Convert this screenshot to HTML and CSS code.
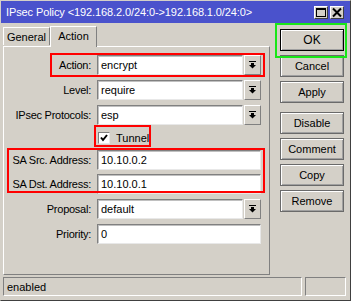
FILE: index.html
```html
<!DOCTYPE html>
<html lang="en">
<head>
    <meta charset="utf-8">
    <title>IPsec Policy</title>
    <link rel="stylesheet" href="styles.css">
</head>
<body>
    <div class="window">
        <div class="titlebar">
            <span class="title">IPsec Policy &lt;192.168.2.0/24:0-&gt;192.168.1.0/24:0&gt;</span>
            <span class="tbtn">
                <svg width="12" height="11" viewBox="0 0 12 11"><rect x="1.5" y="1.5" width="9" height="8" fill="none" stroke="#000"/><rect x="1" y="1" width="10" height="2" fill="#000"/></svg>
            </span>
            <span class="tbtn">
                <svg width="12" height="11" viewBox="0 0 12 11"><path d="M2 1.5 L10 9.5 M10 1.5 L2 9.5" stroke="#000" stroke-width="2"/></svg>
            </span>
        </div>
        <div class="main">
            <div class="left">
                <div class="tabs">
                    <div class="tab">General</div>
                    <div class="tab active">Action</div>
                </div>
                <div class="panel">
                    <div class="row">
                        <label>Action:</label>
                        <div class="combo"><div class="field">encrypt</div><div class="drop"><svg width="7" height="8" viewBox="0 0 7 8"><rect x="0" y="0" width="7" height="1"/><rect x="2" y="2" width="3" height="2"/><path d="M0 4 H7 L3.5 7.5 Z"/></svg></div></div>
                    </div>
                    <div class="row">
                        <label>Level:</label>
                        <div class="combo"><div class="field">require</div><div class="drop"><svg width="7" height="8" viewBox="0 0 7 8"><rect x="0" y="0" width="7" height="1"/><rect x="2" y="2" width="3" height="2"/><path d="M0 4 H7 L3.5 7.5 Z"/></svg></div></div>
                    </div>
                    <div class="row">
                        <label>IPsec Protocols:</label>
                        <div class="combo"><div class="field">esp</div><div class="drop"><svg width="7" height="8" viewBox="0 0 7 8"><rect x="0" y="0" width="7" height="1"/><rect x="2" y="2" width="3" height="2"/><path d="M0 4 H7 L3.5 7.5 Z"/></svg></div></div>
                    </div>
                    <div class="row short">
                        <span></span>
                        <div class="check"><span class="box"><svg width="10" height="10" viewBox="0 0 10 10"><path d="M2 4.5 L4 7 L8 2" fill="none" stroke="#000" stroke-width="2"/></svg></span>Tunnel</div>
                    </div>
                    <div class="row">
                        <label>SA Src. Address:</label>
                        <div class="field">10.10.0.2</div>
                    </div>
                    <div class="row tight">
                        <label>SA Dst. Address:</label>
                        <div class="field">10.10.0.1</div>
                    </div>
                    <div class="row">
                        <label>Proposal:</label>
                        <div class="combo"><div class="field">default</div><div class="drop"><svg width="7" height="8" viewBox="0 0 7 8"><rect x="0" y="0" width="7" height="1"/><rect x="2" y="2" width="3" height="2"/><path d="M0 4 H7 L3.5 7.5 Z"/></svg></div></div>
                    </div>
                    <div class="row">
                        <label>Priority:</label>
                        <div class="field">0</div>
                    </div>
                </div>
            </div>
            <div class="buttons">
                <button class="default">OK</button>
                <button>Cancel</button>
                <button>Apply</button>
                <button class="sep">Disable</button>
                <button>Comment</button>
                <button>Copy</button>
                <button>Remove</button>
            </div>
        </div>
        <div class="status">
            <div class="cell wide">enabled</div>
            <div class="cell"></div>
        </div>
        <div class="mark red mark-action"></div>
        <div class="mark red mark-tunnel"></div>
        <div class="mark red mark-sa"></div>
        <div class="mark green mark-ok"></div>
    </div>
</body>
</html>
```

FILE: styles.css
```css
body {
    margin: 0;
    font-family: "Liberation Sans", Arial, sans-serif;
    font-size: 11px;
    color: #000;
}
.window {
    position: relative;
    width: 351px;
    height: 301px;
    box-sizing: border-box;
    border: 1px solid #404040;
    border-top-color: #d4d0c8;
    border-left-color: #d4d0c8;
    background: #d4d0c8;
}
.titlebar {
    height: 22px;
    background: #4a52cc;
    color: #fff;
    display: flex;
    align-items: center;
    padding-left: 5px;
    padding-right: 6px;
}
.title {
    flex: 1;
    font-size: 11px;
    letter-spacing: -0.1px;
}
.tbtn {
    width: 12px;
    height: 11px;
    margin-left: 2px;
    background: #d4d0c8;
    border: 1px solid #fff;
    border-right-color: #404040;
    border-bottom-color: #404040;
    display: flex;
}
.main {
    display: flex;
    height: 252px;
}
.left {
    margin-left: 2px;
    width: 267px;
}
.tabs {
    display: flex;
    align-items: flex-end;
    height: 23px;
}
.tab {
    width: 45px;
    height: 17px;
    border: 1px solid #fff;
    border-right-color: #808080;
    border-bottom: none;
    display: flex;
    align-items: center;
    justify-content: center;
    margin-bottom: 1px;
}
.tab.active {
    width: 47px;
    height: 21px;
    margin-bottom: -1px;
    position: relative;
    z-index: 1;
    background: #d4d0c8;
    padding-bottom: 2px;
    box-sizing: border-box;
}
.panel {
    height: 229px;
    box-sizing: border-box;
    border: 1px solid #fff;
    border-right-color: #808080;
    border-bottom-color: #808080;
    padding-top: 8px;
    display: flex;
    flex-direction: column;
    gap: 5px;
}
.row {
    display: grid;
    grid-template-columns: 87px 164px;
    column-gap: 6px;
    height: 20px;
    align-items: center;
}
.row.short {
    height: 15px;
}
.row.tight {
    margin-top: -1px;
}
.row label {
    text-align: right;
    letter-spacing: -0.25px;
}
.combo {
    display: flex;
    gap: 1px;
    height: 20px;
}
.field {
    height: 20px;
    box-sizing: border-box;
    background: #fff;
    border: 1px solid #808080;
    border-right-color: #e8e8e8;
    border-bottom-color: #e8e8e8;
    box-shadow: inset 1px 1px 0 #c0c0c0;
    padding-left: 3px;
    display: flex;
    align-items: center;
}
.combo .field {
    flex: 1;
}
.drop {
    width: 17px;
    height: 20px;
    box-sizing: border-box;
    border: 1px solid #fff;
    border-right-color: #808080;
    border-bottom-color: #808080;
    display: flex;
    align-items: center;
    justify-content: center;
}
.check {
    display: flex;
    align-items: center;
    gap: 6px;
    margin-left: 1px;
}
.box {
    width: 12px;
    height: 12px;
    box-sizing: border-box;
    background: #fff;
    border: 1px solid #808080;
    border-right-color: #e8e8e8;
    border-bottom-color: #e8e8e8;
    display: flex;
    align-items: center;
    justify-content: center;
}
.buttons {
    margin-left: 10px;
    padding-top: 6px;
    display: flex;
    flex-direction: column;
    gap: 4px;
}
button {
    width: 64px;
    height: 22px;
    font-family: inherit;
    font-size: 11px;
    background: #d4d0c8;
    color: #000;
    border: 1px solid #6a6a6a;
    box-shadow: inset 1px 1px 0 #fff, inset -1px -1px 0 #a0a0a0;
    padding: 0;
}
button.default {
    border-color: #000;
    font-size: 12px;
}
button.sep {
    margin-top: 5px;
}
.status {
    display: flex;
    gap: 3px;
    padding-left: 2px;
    margin-top: 2px;
}
.cell {
    width: 41px;
    height: 19px;
    box-sizing: border-box;
    border: 1px solid #808080;
    border-right-color: #fff;
    border-bottom-color: #fff;
    display: flex;
    align-items: center;
    padding-left: 3px;
}
.cell.wide {
    width: 299px;
}
.mark {
    position: absolute;
    box-sizing: border-box;
    border: 2px solid #f00;
}
.mark.green {
    border-color: #19e619;
}
.mark-action {
    left: 49px;
    top: 52px;
    width: 215px;
    height: 24px;
}
.mark-tunnel {
    left: 93px;
    top: 124px;
    width: 57px;
    height: 22px;
}
.mark-sa {
    left: 6px;
    top: 147px;
    width: 258px;
    height: 45px;
}
.mark-ok {
    left: 274px;
    top: 22px;
    width: 72px;
    height: 35px;
}
```
